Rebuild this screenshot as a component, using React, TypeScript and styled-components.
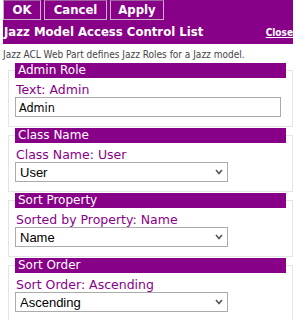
import React from 'react'
import styled, { createGlobalStyle } from 'styled-components'

const Global = createGlobalStyle`
  html, body { margin: 0; padding: 0; background: #ffffff; }
  body { font-family: "DejaVu Sans Condensed", "DejaVu Sans", sans-serif; }
`

const PURPLE = '#880088'

const Panel = styled.div`
  width: 290px;
  padding: 0 4px 0 3px;
`

const TopBar = styled.div`
  background: ${PURPLE};
`

const ButtonRow = styled.div`
  display: flex;
  gap: 3px;
`

const ToolButton = styled.button<{ $w: number }>`
  width: ${({ $w }) => $w}px;
  height: 20px;
  padding: 0;
  margin: 0;
  background: ${PURPLE};
  color: #ffffff;
  border: 1px solid #c8b0c8;
  border-top-color: #a060a0;
  font-family: "DejaVu Sans Condensed", "DejaVu Sans", sans-serif;
  font-weight: bold;
  font-size: 13px;
  line-height: 18px;
`

const TitleRow = styled.div`
  display: flex;
  justify-content: space-between;
  align-items: baseline;
  height: 24px;
  padding: 4px 0 0 1px;
  box-sizing: border-box;
`

const Title = styled.span`
  color: #ffffff;
  font-weight: bold;
  font-size: 13px;
`

const CloseLink = styled.a`
  color: #ffffff;
  font-weight: bold;
  font-size: 10px;
  text-decoration: underline;
`

const Description = styled.div`
  color: #444444;
  font-size: 10px;
  padding: 5px 0 0 0;
  height: 13px;
`

const Section = styled.fieldset`
  margin: 1px 0 0 5px;
  padding: 0 6px 9px 6px;
  border: 1px solid #e4e4e4;
  min-width: 0;
`

const SectionHeader = styled.legend`
  width: 100%;
  box-sizing: border-box;
  height: 15px;
  padding: 0 3px;
  background: ${PURPLE};
  color: #ffffff;
  font-family: "DejaVu Sans", sans-serif;
  font-size: 12px;
  line-height: 15px;
`

const FieldLabel = styled.div`
  color: ${PURPLE};
  font-family: "DejaVu Sans", sans-serif;
  font-size: 12.5px;
  line-height: 15px;
  padding: 4px 0 0 1px;
  height: 15px;
`

const TextInput = styled.input`
  display: block;
  width: 266px;
  height: 20px;
  box-sizing: border-box;
  margin: 0;
  padding: 0 3px;
  border: 1px solid #ababab;
  font-family: "DejaVu Sans Condensed", "DejaVu Sans", sans-serif;
  font-size: 12.5px;
  color: #000000;
`

const SelectWrap = styled.div`
  position: relative;
  width: 213px;
`

const Select = styled.select`
  display: block;
  width: 100%;
  height: 20px;
  box-sizing: border-box;
  margin: 0;
  padding: 0 4px;
  appearance: none;
  background: #ffffff;
  border: 1px solid #ababab;
  border-radius: 0;
  font-family: "Liberation Sans", Arial, sans-serif;
  font-size: 13px;
  color: #000000;
`

const Chevron = styled.svg`
  position: absolute;
  right: 5px;
  top: 7px;
  pointer-events: none;
`

const Field = ({ title, label, children }: { title: string; label: string; children: React.ReactNode }) => (
  <Section>
    <SectionHeader>{title}</SectionHeader>
    <FieldLabel>{label}</FieldLabel>
    {children}
  </Section>
)

const Dropdown = ({ value }: { value: string }) => (
  <SelectWrap>
    <Select defaultValue={value}>
      <option>{value}</option>
    </Select>
    <Chevron width="8" height="6" viewBox="0 0 8 6">
      <path d="M1 1 L4 4.5 L7 1" fill="none" stroke="#555555" strokeWidth="1.6" />
    </Chevron>
  </SelectWrap>
)

export default function App() {
  return (
    <Panel>
      <Global />
      <TopBar>
        <ButtonRow>
          <ToolButton $w={38}>OK</ToolButton>
          <ToolButton $w={63}>Cancel</ToolButton>
          <ToolButton $w={54}>Apply</ToolButton>
        </ButtonRow>
        <TitleRow>
          <Title>Jazz Model Access Control List</Title>
          <CloseLink href="#">Close</CloseLink>
        </TitleRow>
      </TopBar>
      <Description>Jazz ACL Web Part defines Jazz Roles for a Jazz model.</Description>
      <Field title="Admin Role" label="Text: Admin">
        <TextInput defaultValue="Admin" />
      </Field>
      <Field title="Class Name" label="Class Name: User">
        <Dropdown value="User" />
      </Field>
      <Field title="Sort Property" label="Sorted by Property: Name">
        <Dropdown value="Name" />
      </Field>
      <Field title="Sort Order" label="Sort Order: Ascending">
        <Dropdown value="Ascending" />
      </Field>
    </Panel>
  )
}
